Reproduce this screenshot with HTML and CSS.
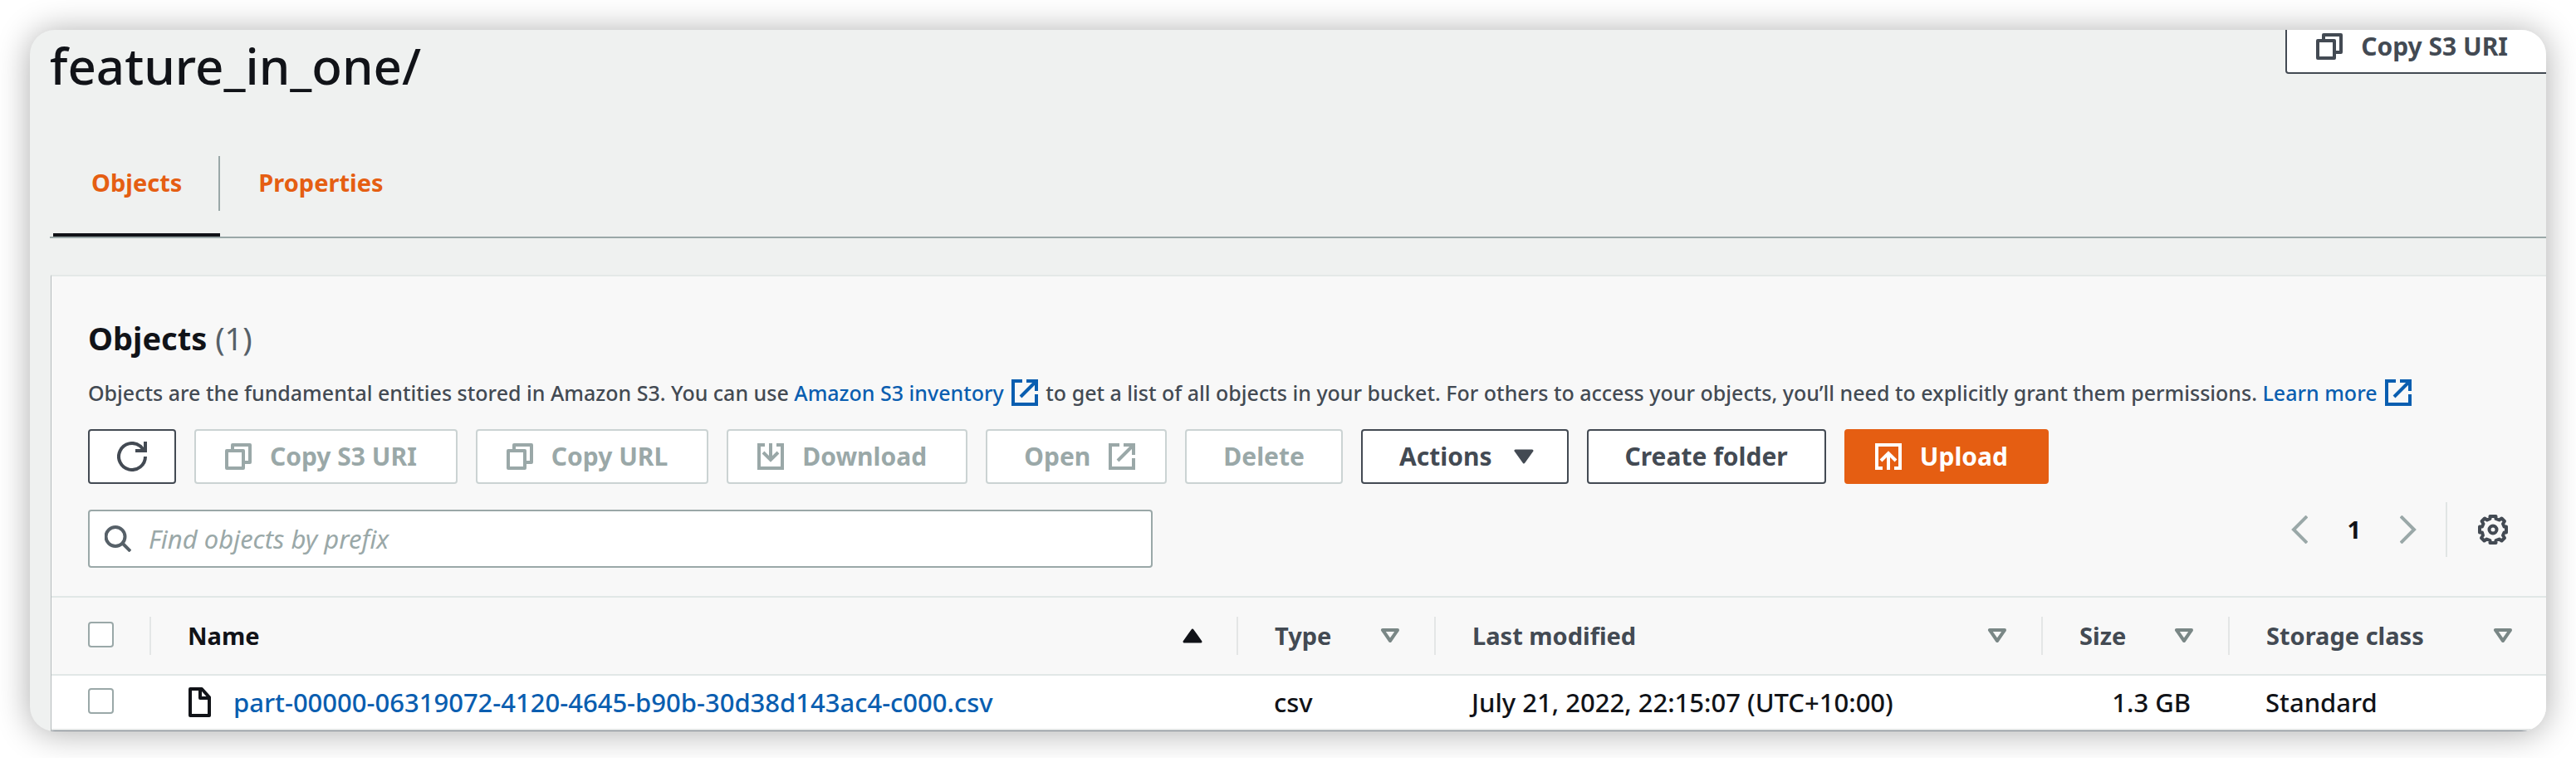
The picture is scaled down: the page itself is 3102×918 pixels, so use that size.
FILE: index.html
```html
<!DOCTYPE html>
<html lang="en">
<head>
<meta charset="utf-8">
<title>feature_in_one/</title>
<link rel="stylesheet" href="styles.css">
</head>
<body>
<svg class="sprite" aria-hidden="true">
  <symbol id="i-copy" viewBox="0 0 32 32"><path d="M2 9h20v21H2zM9 9V2h21v21h-8" fill="none" stroke="currentColor" stroke-width="4" stroke-linejoin="round"/></symbol>
  <symbol id="i-refresh" viewBox="0 0 36 36"><path d="M34 18a16 16 0 1 1-6-12.500l5 5.500M34 0v11H22" fill="none" stroke="currentColor" stroke-width="4"/></symbol>
  <symbol id="i-external" viewBox="0 0 32 32"><path d="M13 2H2v28h28V18M18 2h12v12M29 3L11 21" fill="none" stroke="currentColor" stroke-width="4"/></symbol>
  <symbol id="i-download" viewBox="0 0 32 32"><path d="M9 2H2v28h28V2h-7M16 0v20M7 11l9 9 9-9" fill="none" stroke="currentColor" stroke-width="4"/></symbol>
  <symbol id="i-upload" viewBox="0 0 32 32"><path d="M9 30H2V2h28v28h-7M16 32V12M7 21l9-9 9 9" fill="none" stroke="currentColor" stroke-width="4"/></symbol>
  <symbol id="i-search" viewBox="0 0 32 32"><path d="M13 2a11.500 11.500 0 1 0 0 23a11.500 11.500 0 1 0 0-23M21 21L31 31" fill="none" stroke="currentColor" stroke-width="4"/></symbol>
  <symbol id="i-caret" viewBox="0 0 24 18"><path d="M2 2h20l-10 14z" fill="currentColor" stroke="currentColor" stroke-width="3" stroke-linejoin="round"/></symbol>
  <symbol id="i-sort" viewBox="0 0 24 18"><path d="M3 2h18l-9 13z" fill="none" stroke="currentColor" stroke-width="4" stroke-linejoin="round"/></symbol>
  <symbol id="i-asc" viewBox="0 0 24 18"><path d="M2 16h20L12 2z" fill="currentColor" stroke="currentColor" stroke-width="3" stroke-linejoin="round"/></symbol>
  <symbol id="i-prev" viewBox="0 0 20 34"><path d="M19 1L3 17l16 16" fill="none" stroke="currentColor" stroke-width="4"/></symbol>
  <symbol id="i-next" viewBox="0 0 20 34"><path d="M1 1l16 16L1 33" fill="none" stroke="currentColor" stroke-width="4"/></symbol>
  <symbol id="i-gear" viewBox="0 0 36 36"><path d="M14.500 2h7v3l4 1.500 3-2 3.500 3.500-2 3 1.500 3.500h2.500v7h-2.500l-1.500 3.500 2 3-3.500 3.500-3-2-4 1.500v3h-7v-3l-4-1.500-3 2-3.500-3.500 2-3L5 21.500H2v-7h3L6.500 11l-2-3L8 4.500l3 2 3.500-1.500z" fill="none" stroke="currentColor" stroke-width="4" stroke-linejoin="round"/><circle cx="18" cy="18" r="4.500" fill="none" stroke="currentColor" stroke-width="4"/></symbol>
  <symbol id="i-file" viewBox="0 0 28 36"><path d="M2 2h14l9 10v22H2zM14 2v11h11" fill="none" stroke="currentColor" stroke-width="4" stroke-linejoin="round"/></symbol>
</svg>

<div class="window">
  <header class="page-head">
    <h1 class="page-title">feature_in_one/</h1>
    <button class="btn btn-lead btn-head" type="button"><svg class="icon"><use href="#i-copy"/></svg>Copy S3 URI</button>
  </header>

  <nav class="tabs">
    <a class="tab tab-active" href="#objects">Objects</a>
    <a class="tab" href="#properties">Properties</a>
  </nav>

  <section class="card" id="objects">
    <div class="card-head">
      <h2 class="card-title">Objects <span class="count">(1)</span></h2>
      <p class="desc">Objects are the fundamental entities stored in Amazon S3. You can use <a class="link" href="#inventory">Amazon S3 inventory<svg class="icon icon-inline"><use href="#i-external"/></svg></a> to get a list of all objects in your bucket. For others to access your objects, you’ll need to explicitly grant them permissions. <a class="link" href="#learn">Learn more<svg class="icon icon-inline"><use href="#i-external"/></svg></a></p>

      <div class="actions">
        <button class="btn btn-icon" type="button" aria-label="Refresh"><svg class="icon icon-lg"><use href="#i-refresh"/></svg></button>
        <button class="btn btn-lead" type="button" disabled><svg class="icon"><use href="#i-copy"/></svg>Copy S3 URI</button>
        <button class="btn btn-lead" type="button" disabled><svg class="icon"><use href="#i-copy"/></svg>Copy URL</button>
        <button class="btn btn-lead" type="button" disabled><svg class="icon"><use href="#i-download"/></svg>Download</button>
        <button class="btn btn-trail" type="button" disabled>Open<svg class="icon"><use href="#i-external"/></svg></button>
        <button class="btn" type="button" disabled>Delete</button>
        <button class="btn btn-trail" type="button">Actions<svg class="icon icon-caret"><use href="#i-caret"/></svg></button>
        <button class="btn" type="button">Create folder</button>
        <button class="btn btn-lead btn-primary" type="button"><svg class="icon"><use href="#i-upload"/></svg>Upload</button>
      </div>

      <div class="filter-row">
        <label class="search">
          <svg class="icon"><use href="#i-search"/></svg>
          <input class="search-input" type="text" placeholder="Find objects by prefix" aria-label="Find objects by prefix">
        </label>
        <div class="pager">
          <button class="plain" type="button" aria-label="Previous page"><svg class="chevron"><use href="#i-prev"/></svg></button>
          <button class="plain page-number" type="button">1</button>
          <button class="plain" type="button" aria-label="Next page"><svg class="chevron"><use href="#i-next"/></svg></button>
          <button class="plain settings" type="button" aria-label="Preferences"><svg class="icon icon-lg"><use href="#i-gear"/></svg></button>
        </div>
      </div>
    </div>

    <table class="table">
      <colgroup><col class="col-check"><col><col class="col-type"><col class="col-modified"><col class="col-size"><col class="col-class"></colgroup>
      <thead>
        <tr>
          <th class="cell-check"><input class="check" type="checkbox" aria-label="Select all"></th>
          <th><div class="th th-sorted">Name<svg class="sort"><use href="#i-asc"/></svg></div></th>
          <th><div class="th">Type<svg class="sort"><use href="#i-sort"/></svg></div></th>
          <th><div class="th">Last modified<svg class="sort"><use href="#i-sort"/></svg></div></th>
          <th><div class="th">Size<svg class="sort"><use href="#i-sort"/></svg></div></th>
          <th><div class="th">Storage class<svg class="sort"><use href="#i-sort"/></svg></div></th>
        </tr>
      </thead>
      <tbody>
        <tr>
          <td class="cell-check"><input class="check" type="checkbox" aria-label="Select object"></td>
          <td><div class="file"><svg class="icon-file"><use href="#i-file"/></svg><a class="link" href="#object">part-00000-06319072-4120-4645-b90b-30d38d143ac4-c000.csv</a></div></td>
          <td>csv</td>
          <td>July 21, 2022, 22:15:07 (UTC+10:00)</td>
          <td class="cell-num">1.3 GB</td>
          <td>Standard</td>
        </tr>
      </tbody>
    </table>
  </section>
</div>
</body>
</html>
```
FILE: styles.css
```css
* { box-sizing: border-box; }
body {
  margin: 0;
  padding: 36px 36px 32px;
  background: #fff;
  color: #111318;
  font-family: "Noto Sans", "Open Sans", sans-serif;
  font-size: 31px;
  font-weight: 500;
  line-height: 44px;
}
h1, h2, p { margin: 0; }
button, input { font: inherit; color: inherit; margin: 0; }
.sprite { display: none; }
.window {
  overflow: hidden;
  border-radius: 30px;
  background: #eff1f0;
  box-shadow: 0 2px 40px rgba(0, 0, 0, .33);
}
.page-head {
  display: flex;
  justify-content: space-between;
  align-items: flex-start;
  height: 152px;
  padding-left: 24px;
}
.page-title { font-size: 60px; font-weight: 500; line-height: 86px; }
.btn {
  display: inline-flex;
  align-items: center;
  gap: 22px;
  height: 66px;
  padding: 0 44px;
  border: 2px solid #434a53;
  border-radius: 4px;
  background: #fff;
  color: #434a53;
  font-size: 30px;
  font-weight: 700;
  white-space: nowrap;
}
.btn:disabled { border-color: #cbd3d3; color: #9aa8a8; }
.btn-lead { padding: 0 47px 0 35px; }
.btn-trail { padding-right: 36px; }
.btn-icon { padding: 0 33px; }
.btn-primary { border-color: #e55e12; background: #e55e12; color: #fff; }
.btn-head { margin: -13px -3px 0 0; }
.icon { flex: none; width: 32px; height: 32px; }
.icon-lg { width: 36px; height: 36px; }
.icon-caret { width: 24px; height: 18px; margin: 0 4px; }
.icon-inline { margin: 0 3px 0 9px; vertical-align: -6px; }

.tabs {
  display: flex;
  height: 99px;
  margin-left: 24px;
  padding-left: 4px;
  border-bottom: 2px solid #9aa8a8;
}
.tab {
  padding: 10px 46px 0;
  color: #e55e12;
  font-size: 29px;
  font-weight: 700;
  text-decoration: none;
  background: linear-gradient(#9aa8a8, #9aa8a8) no-repeat right top / 2px 66px;
}
.tab:last-child { background: none; }
.tab-active { border-bottom: 4px solid #111318; }

.card {
  margin: 44px 0 0 25px;
  border-top: 2px solid #e4e8e7;
  border-left: 1px solid #b4babc;
  border-bottom: 1px solid #7f8790;
  background: #f8f8f8;
}
.card-head { padding: 47px 46px 34px 44px; }
.card-title { font-size: 38px; line-height: 54px; }
.count { color: #566068; font-weight: 400; }
.desc { margin-top: 19px; color: #434a53; font-size: 25px; line-height: 40px; white-space: nowrap; }
.link { color: #0a5eb0; text-decoration: none; }
.actions { display: flex; gap: 22px; margin-top: 24px; }
.filter-row { display: flex; justify-content: space-between; align-items: flex-start; margin-top: 31px; }
.search {
  display: flex;
  align-items: center;
  gap: 21px;
  width: 1282px;
  height: 70px;
  padding: 0 18px;
  border: 2px solid #9aa8a8;
  border-radius: 4px;
  background: #fff;
  color: #566068;
}
.search-input { flex: 1; padding: 0; border: 0; outline: 0; background: none; }
.search-input::placeholder { color: #9aa8a8; font-style: italic; font-weight: 400; opacity: 1; }
.pager { display: flex; align-items: center; height: 66px; margin-top: -9px; color: #9aa8a8; }
.plain { display: flex; align-items: center; padding: 0; border: 0; background: none; }
.chevron { width: 20px; height: 34px; }
.page-number { padding: 0 47px; color: #111318; font-size: 29px; font-weight: 700; }
.settings { height: 66px; margin-left: 35px; padding-left: 37px; border-left: 2px solid #e1e5e4; color: #434a53; }

.table { width: 100%; border-collapse: collapse; table-layout: fixed; }
.col-check { width: 120px; }
.col-type { width: 238px; }
.col-modified { width: 731px; }
.col-size { width: 225px; }
.col-class { width: 381px; }
.table th { height: 94px; padding: 0; border-top: 2px solid #e1e7e6; border-bottom: 2px solid #e1e7e6; text-align: left; }
.th {
  display: flex;
  justify-content: space-between;
  align-items: center;
  height: 46px;
  padding: 0 43px 0 44px;
  color: #434a53;
  font-size: 29px;
}
th:last-child .th { padding-right: 40px; }
th:not(:last-child) .th, th.cell-check { background: linear-gradient(#e4e6e6, #e4e6e6) no-repeat right center / 2px 46px; }
.th-sorted { color: #111318; }
.sort { width: 24px; height: 18px; color: #7a8786; }
.th-sorted .sort { color: #111318; }
.table td { height: 66px; padding: 0 47px 0 43px; border-bottom: 2px solid #e1e4e4; background: #fff; white-space: nowrap; }
.table .cell-check { padding: 0 0 4px 44px; }
.cell-num { text-align: right; }
.check {
  appearance: none;
  display: block;
  width: 31px;
  height: 31px;
  border: 2px solid #9aa8a8;
  border-radius: 4px;
  background: #fff;
}
.file { display: flex; align-items: center; gap: 26px; padding-left: 2px; }
.icon-file { flex: none; width: 28px; height: 36px; }
```
